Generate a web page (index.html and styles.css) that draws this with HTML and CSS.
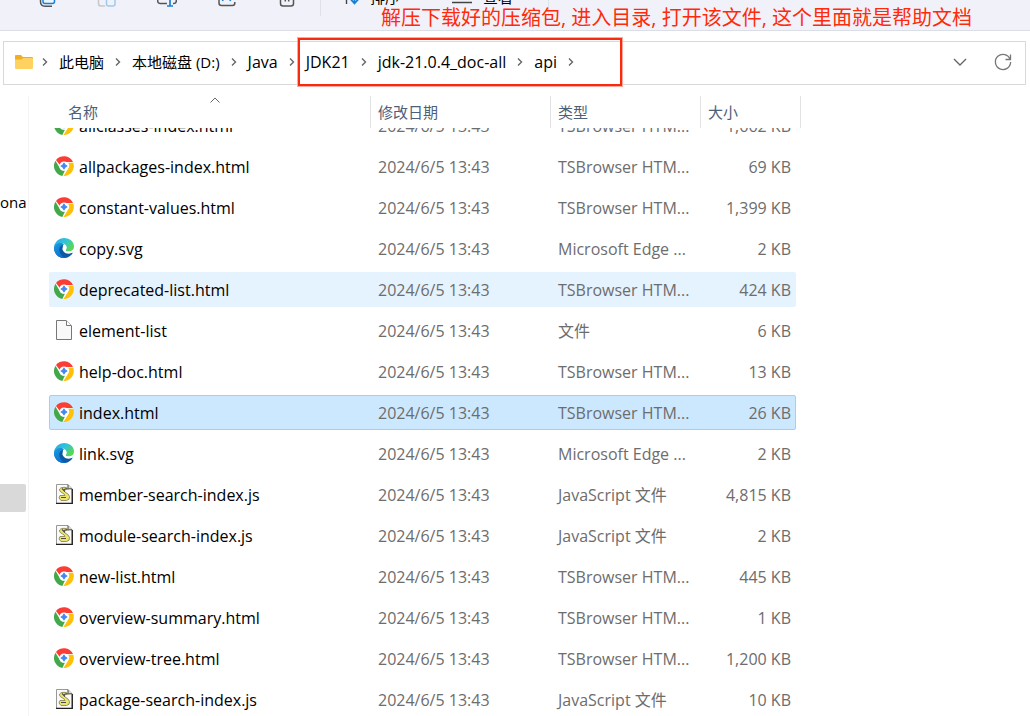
FILE: index.html
```html
<!DOCTYPE html>
<html lang="zh-CN">
<head>
<meta charset="utf-8">
<title>api</title>
<link rel="stylesheet" href="styles.css">
</head>
<body>
<svg class="sprite" aria-hidden="true">
  <defs>
    <linearGradient id="edge-top" x1="0" y1="0" x2="1" y2="0.6">
      <stop offset="0" stop-color="#2aa5e0"/><stop offset="0.5" stop-color="#2fc2df"/><stop offset="1" stop-color="#5bd84f"/>
    </linearGradient>
    <linearGradient id="edge-left" x1="0" y1="0" x2="0.6" y2="1">
      <stop offset="0" stop-color="#1b9de2"/><stop offset="1" stop-color="#0c6fd0"/>
    </linearGradient>
    <symbol id="chrome" viewBox="0 0 20 20">
      <circle cx="10" cy="10" r="9.500" fill="#fff"/>
      <path d="M1.800 4.300A10 10 0 0 1 19 6H10.500a4.600 4.600 0 0 0-4.700 3L2 4z" fill="#fb3d35"/>
      <path d="M1.500 4.700 5.500 11.500a4.700 4.700 0 0 0 5.500 3L8.300 19.900A10 10 0 0 1 1.500 4.700z" fill="#43a84a"/>
      <path d="M19.300 6.800A10 10 0 0 1 9.500 20l4.700-7.600a4.700 4.700 0 0 0 0-5.600z" fill="#ffc107"/>
      <circle cx="10" cy="10" r="4.600" fill="#fff"/>
      <path d="M10 6.800q.8 2.400 3.200 3.200-2.400.8-3.200 3.200-.8-2.400-3.200-3.200 2.400-.8 3.200-3.200z" fill="#4285f4" stroke="#4285f4" stroke-width=".8"/>
    </symbol>
    <symbol id="edge" viewBox="0 0 20 20">
      <path d="M0 10a10 10 0 0 0 14 9.200A10 10 0 0 0 19 14.500C14 15 10 14 8.600 11.500L9 6.500 4 5z" fill="#0c59a4"/>
      <path d="M0 9C1 4 7 3 10.500 6.500 6 7 5 10 5.500 13c.6 3.400 3 6 6.500 6.800A10 10 0 0 1 0 9z" fill="url(#edge-left)"/>
      <path d="M0 9.500A10 10 0 0 1 10 0c6 0 10 4 10 8.500 0 3.500-2.600 5-5.500 5-2 0-3-.8-2.700-1.600.4-.9 1-1.300.8-2.800C12.200 6.500 9.500 5 6.500 5 3.500 5 1 6.500 0 9.500z" fill="url(#edge-top)"/>
      <path d="M12.300 8.500c.4 1.500-.5 2.300-.7 3-.3 1 .9 2 2.900 2 2 0 3.400-.5 4.300-1.200.8.300.8 1.300.1 2.200-3.400 2-7.400 1.200-9.300-1.100C8.200 11.800 8.300 9 10 8.400z" fill="#fff"/>
    </symbol>
    <symbol id="file" viewBox="0 0 20 20">
      <path d="M2.500.5H12l5.500 5.200v13.800h-15z" fill="#f9f9f9" stroke="#777"/>
      <path d="M12.500.8v4.700h4.700" fill="#fff" stroke="#777"/>
    </symbol>
    <symbol id="script" viewBox="0 0 20 20">
      <path d="M2.500.5H14l4 4.200v14.800H2.500z" fill="#fafafa" stroke="#999"/>
      <path d="M18.300 5v14.500H2" fill="none" stroke="#222" stroke-width="1.300"/>
      <path d="M14 .8v4h4" fill="#ddd" stroke="#444"/>
      <path d="M14.500 5Q13 3 10 3.300 5.500 3.500 5.500 6q0 1.500 3 3 2.500 1.300 2.500 2.500H6l-1 2.500 2 2.500h5.500q3.500-.5 3-4-.5-2.500-4.500-4.500-1.500-1-1-2z" fill="#eee66c" stroke="#8a8658" stroke-width=".9"/>
      <path d="M10 6q.5-1.500 3.500-1.500M8 4.500l3 3M7 13.500h5" fill="none" stroke="#4b4b4b" stroke-width="1.100"/>
    </symbol>
    <symbol id="chevron" viewBox="0 0 8 10">
      <path d="M2 1.500 5.500 5 2 8.500" fill="none" stroke="#666" stroke-width="1.400"/>
    </symbol>
  </defs>
</svg>

<header class="toolbar">
  <button class="tool" aria-label="复制"><svg class="icon" viewBox="0 0 20 20"><path d="M3.500 5v9.500Q3.500 19.200 8 19.200h7" fill="none" stroke="#555" stroke-width="1.500"/><rect x="6" y="1" width="11.500" height="15.500" rx="2" fill="#eaf5fd" stroke="#1b7fd4" stroke-width="1.500"/></svg></button>
  <button class="tool faded" aria-label="粘贴"><svg class="icon" viewBox="0 0 20 20"><path d="M8 19H4q-2.500 0-2.500-2.500V2" fill="none" stroke="#888" stroke-width="1.500"/><rect x="9.500" y="5" width="8.500" height="14" rx="2" fill="#eaf5fd" stroke="#2b8ddb" stroke-width="1.500"/></svg></button>
  <button class="tool" aria-label="重命名"><svg class="icon" viewBox="0 0 20 20"><path d="M10 16.500H3q-2.300 0-2.300-2.500V5M16 16.500h1q2.300 0 2.300-2.500V5" fill="none" stroke="#555" stroke-width="1.500"/><path d="M13 1v18M10 19h6" stroke="#1b7fd4" stroke-width="1.700"/></svg></button>
  <button class="tool" aria-label="共享"><svg class="icon" viewBox="0 0 20 20"><path d="M2 5v11q0 2.500 2.500 2.500h11q2.300 0 2.300-2.500v-1" fill="none" stroke="#555" stroke-width="1.500"/><path d="M5.500 14q1-3 4-3M13 14q1-3 4-3" fill="none" stroke="#1b7fd4" stroke-width="1.500"/></svg></button>
  <button class="tool" aria-label="删除"><svg class="icon" viewBox="0 0 20 20"><path d="M3.500 4v12.500Q3.500 19 6 19h8q2.500 0 2.500-2.500V4M8.300 9v5.500M11.700 9v5.500" fill="none" stroke="#555" stroke-width="1.500"/></svg></button>
  <span class="divider"></span>
  <button class="menu sort"><svg class="icon" viewBox="0 0 20 20"><path d="M4.500 17V3M1 6.500 4.500 3 8 6.500" fill="none" stroke="#444" stroke-width="1.400"/><path d="M12.500 3v13M8.500 12l4 4.500 4-4.500" fill="none" stroke="#1b7fd4" stroke-width="1.800"/></svg>排序</button>
  <button class="menu view"><svg class="icon" viewBox="0 0 20 20"><path d="M0 5h20M0 10h20M0 15.500h20" stroke="#444" stroke-width="1.300"/></svg>查看</button>
  <span class="divider"></span>
</header>

<nav class="address" aria-label="地址栏">
  <svg class="folder" viewBox="0 0 20 16" aria-hidden="true"><path d="M1 1.500Q1 1 2 1h5l1.800 2H18q1 0 1 1v4H1z" fill="#efaf20"/><path d="M1 5.500h6.500L9 4h9q1 0 1 1v9q0 1-1 1H2q-1 0-1-1z" fill="#ffd25f"/></svg>
  <svg class="chevron"><use href="#chevron"/></svg>
  <a class="drive" href="#">此电脑</a>
  <svg class="chevron"><use href="#chevron"/></svg>
  <a class="drive" href="#">本地磁盘 (D:)</a>
  <svg class="chevron"><use href="#chevron"/></svg>
  <a href="#">Java</a>
  <svg class="chevron"><use href="#chevron"/></svg>
  <a href="#">JDK21</a>
  <svg class="chevron"><use href="#chevron"/></svg>
  <a href="#">jdk-21.0.4_doc-all</a>
  <svg class="chevron"><use href="#chevron"/></svg>
  <a href="#">api</a>
  <svg class="chevron"><use href="#chevron"/></svg>
  <div class="address-actions">
    <button aria-label="历史记录"><svg class="icon" viewBox="0 0 20 20"><path d="M4 7l6 6 6-6" fill="none" stroke="#666" stroke-width="1.400"/></svg></button>
    <button aria-label="刷新"><svg class="icon" viewBox="0 0 20 20"><path d="M17.200 7.500A7.600 7.600 0 1 0 17.600 10M17.500 2.500v5h-5" fill="none" stroke="#777" stroke-width="1.300"/></svg></button>
  </div>
</nav>

<main class="content">
  <aside class="sidebar">
    <a class="side-item" href="#">ona</a>
    <a class="side-item active" href="#" aria-label="当前位置"></a>
  </aside>
  <table class="files">
    <thead>
      <tr>
        <th>名称<svg class="sort-mark" viewBox="0 0 10 6"><path d="M.5 5.500 5 1l4.500 4.500" fill="none" stroke="#666"/></svg></th>
        <th>修改日期</th><th>类型</th><th>大小</th>
      </tr>
    </thead>
    <tbody>
      <tr><td><svg class="icon"><use href="#chrome"/></svg>allclasses-index.html</td><td>2024/6/5 13:43</td><td>TSBrowser HTM...</td><td>1,662 KB</td></tr>
      <tr><td><svg class="icon"><use href="#chrome"/></svg>allpackages-index.html</td><td>2024/6/5 13:43</td><td>TSBrowser HTM...</td><td>69 KB</td></tr>
      <tr><td><svg class="icon"><use href="#chrome"/></svg>constant-values.html</td><td>2024/6/5 13:43</td><td>TSBrowser HTM...</td><td>1,399 KB</td></tr>
      <tr><td><svg class="icon"><use href="#edge"/></svg>copy.svg</td><td>2024/6/5 13:43</td><td>Microsoft Edge ...</td><td>2 KB</td></tr>
      <tr class="hovered"><td><svg class="icon"><use href="#chrome"/></svg>deprecated-list.html</td><td>2024/6/5 13:43</td><td>TSBrowser HTM...</td><td>424 KB</td></tr>
      <tr><td><svg class="icon"><use href="#file"/></svg>element-list</td><td>2024/6/5 13:43</td><td>文件</td><td>6 KB</td></tr>
      <tr><td><svg class="icon"><use href="#chrome"/></svg>help-doc.html</td><td>2024/6/5 13:43</td><td>TSBrowser HTM...</td><td>13 KB</td></tr>
      <tr class="selected"><td><svg class="icon"><use href="#chrome"/></svg>index.html</td><td>2024/6/5 13:43</td><td>TSBrowser HTM...</td><td>26 KB</td></tr>
      <tr><td><svg class="icon"><use href="#edge"/></svg>link.svg</td><td>2024/6/5 13:43</td><td>Microsoft Edge ...</td><td>2 KB</td></tr>
      <tr><td><svg class="icon"><use href="#script"/></svg>member-search-index.js</td><td>2024/6/5 13:43</td><td>JavaScript 文件</td><td>4,815 KB</td></tr>
      <tr><td><svg class="icon"><use href="#script"/></svg>module-search-index.js</td><td>2024/6/5 13:43</td><td>JavaScript 文件</td><td>2 KB</td></tr>
      <tr><td><svg class="icon"><use href="#chrome"/></svg>new-list.html</td><td>2024/6/5 13:43</td><td>TSBrowser HTM...</td><td>445 KB</td></tr>
      <tr><td><svg class="icon"><use href="#chrome"/></svg>overview-summary.html</td><td>2024/6/5 13:43</td><td>TSBrowser HTM...</td><td>1 KB</td></tr>
      <tr><td><svg class="icon"><use href="#chrome"/></svg>overview-tree.html</td><td>2024/6/5 13:43</td><td>TSBrowser HTM...</td><td>1,200 KB</td></tr>
      <tr><td><svg class="icon"><use href="#script"/></svg>package-search-index.js</td><td>2024/6/5 13:43</td><td>JavaScript 文件</td><td>10 KB</td></tr>
    </tbody>
  </table>
</main>

<p class="note">解压下载好的压缩包, 进入目录, 打开该文件, 这个里面就是帮助文档</p>
<div class="note-frame"></div>
</body>
</html>
```
FILE: styles.css
```css
* {
  box-sizing: border-box;
}

body {
  margin: 0;
  height: 100vh;
  overflow: hidden;
  display: flex;
  flex-direction: column;
  position: relative;
  background: #fff;
  color: #000;
  font: 15px/20px "Open Sans", "Noto Sans CJK SC", sans-serif;
}

button {
  padding: 0;
  border: 0;
  background: none;
  color: inherit;
  font: inherit;
}

a {
  color: inherit;
  text-decoration: none;
}

.sprite {
  position: absolute;
  width: 0;
  height: 0;
}

.icon {
  width: 20px;
  height: 20px;
  flex: none;
  display: block;
}

.toolbar {
  flex: none;
  display: flex;
  align-items: center;
  height: 67px;
  margin-top: -36px;
  padding-left: 17px;
  background: #f1f2f9;
  border-bottom: 1px solid #dcdee6;
}

.tool {
  width: 60px;
  display: flex;
  justify-content: center;
}

.faded {
  opacity: 0.4;
}

.divider {
  width: 1px;
  height: 38px;
  margin-left: 3px;
  background: #dfe1e8;
}

.menu {
  display: flex;
  align-items: center;
  gap: 8px;
}

.sort {
  margin-left: 21px;
}

.view {
  gap: 11px;
  margin: 0 32px 0 52px;
}

/* Address bar */
.address {
  flex: none;
  display: flex;
  align-items: center;
  gap: 10px;
  height: 44px;
  margin: 10px 4px 0 3px;
  padding: 0 12px 2px 10px;
  border: 1px solid #d9d9d9;
  font-size: 16px;
  white-space: nowrap;
}

.drive {
  font-size: 15px;
}

.folder {
  width: 20px;
  height: 16px;
  margin-right: -3px;
}

.chevron {
  width: 8px;
  height: 10px;
}

.address-actions {
  display: flex;
  gap: 23px;
  margin-left: auto;
}

/* Sidebar and list */
.content {
  flex: 1;
  min-height: 0;
  display: flex;
  padding-top: 11px;
}

.sidebar {
  flex: none;
  width: 29px;
  padding-right: 2px;
  border-right: 1px solid #f3f3f3;
}

.side-item {
  display: block;
  height: 28px;
  margin-top: 92px;
  line-height: 28px;
}

.side-item.active {
  margin-top: 268px;
  border-radius: 0 2px 2px 0;
  background: #d9d9d9;
}

.files {
  display: block;
  margin-left: 20px;
}

.files thead {
  display: block;
  position: relative;
  z-index: 1;
  background: #fff;
}

.files tbody {
  display: flex;
  flex-direction: column;
  gap: 6px;
  margin: -20px 5px 0 0;
}

.files tr {
  display: grid;
  grid-template-columns: 321px 180px 150px 94px;
}

.files thead tr {
  grid-template-columns: 322px 180px 150px 100px;
}

.files th {
  position: relative;
  height: 32px;
  padding: 6px 7px 0;
  border-right: 1px solid #e3e3e3;
  color: #4c607a;
  font-weight: 400;
  text-align: left;
}

.files th:first-child {
  padding-left: 19px;
}

.sort-mark {
  position: absolute;
  top: 1px;
  left: 161px;
  width: 10px;
  height: 6px;
}

.files tbody tr {
  height: 35px;
  align-items: center;
  border: 1px solid transparent;
  border-radius: 2px;
}

.files td {
  padding: 0 4px 0 7px;
  color: #6d6d6d;
  font-size: 16px;
  white-space: nowrap;
}

.files td:first-child {
  display: flex;
  align-items: center;
  gap: 5px;
  padding-left: 4px;
  color: #000;
}

.files td .icon {
  margin-bottom: 2px;
}

.files td:last-child {
  padding: 0 4px 0 0;
  text-align: right;
}

.files .hovered {
  background: #e5f3ff;
}

.files .selected {
  background: #cce8ff;
  border-color: #99d1ff;
}

/* Annotations drawn over the window */
.note {
  position: absolute;
  top: 4px;
  left: 381px;
  margin: 0;
  color: #ff2a0a;
  font-size: 20px;
  line-height: 28px;
  white-space: nowrap;
}

.note-frame {
  position: absolute;
  top: 38px;
  left: 298px;
  width: 324px;
  height: 48px;
  border: 2px solid #fa2a0f;
  box-shadow: 0 0 0 1px #fcaaa0;
  pointer-events: none;
}
```
